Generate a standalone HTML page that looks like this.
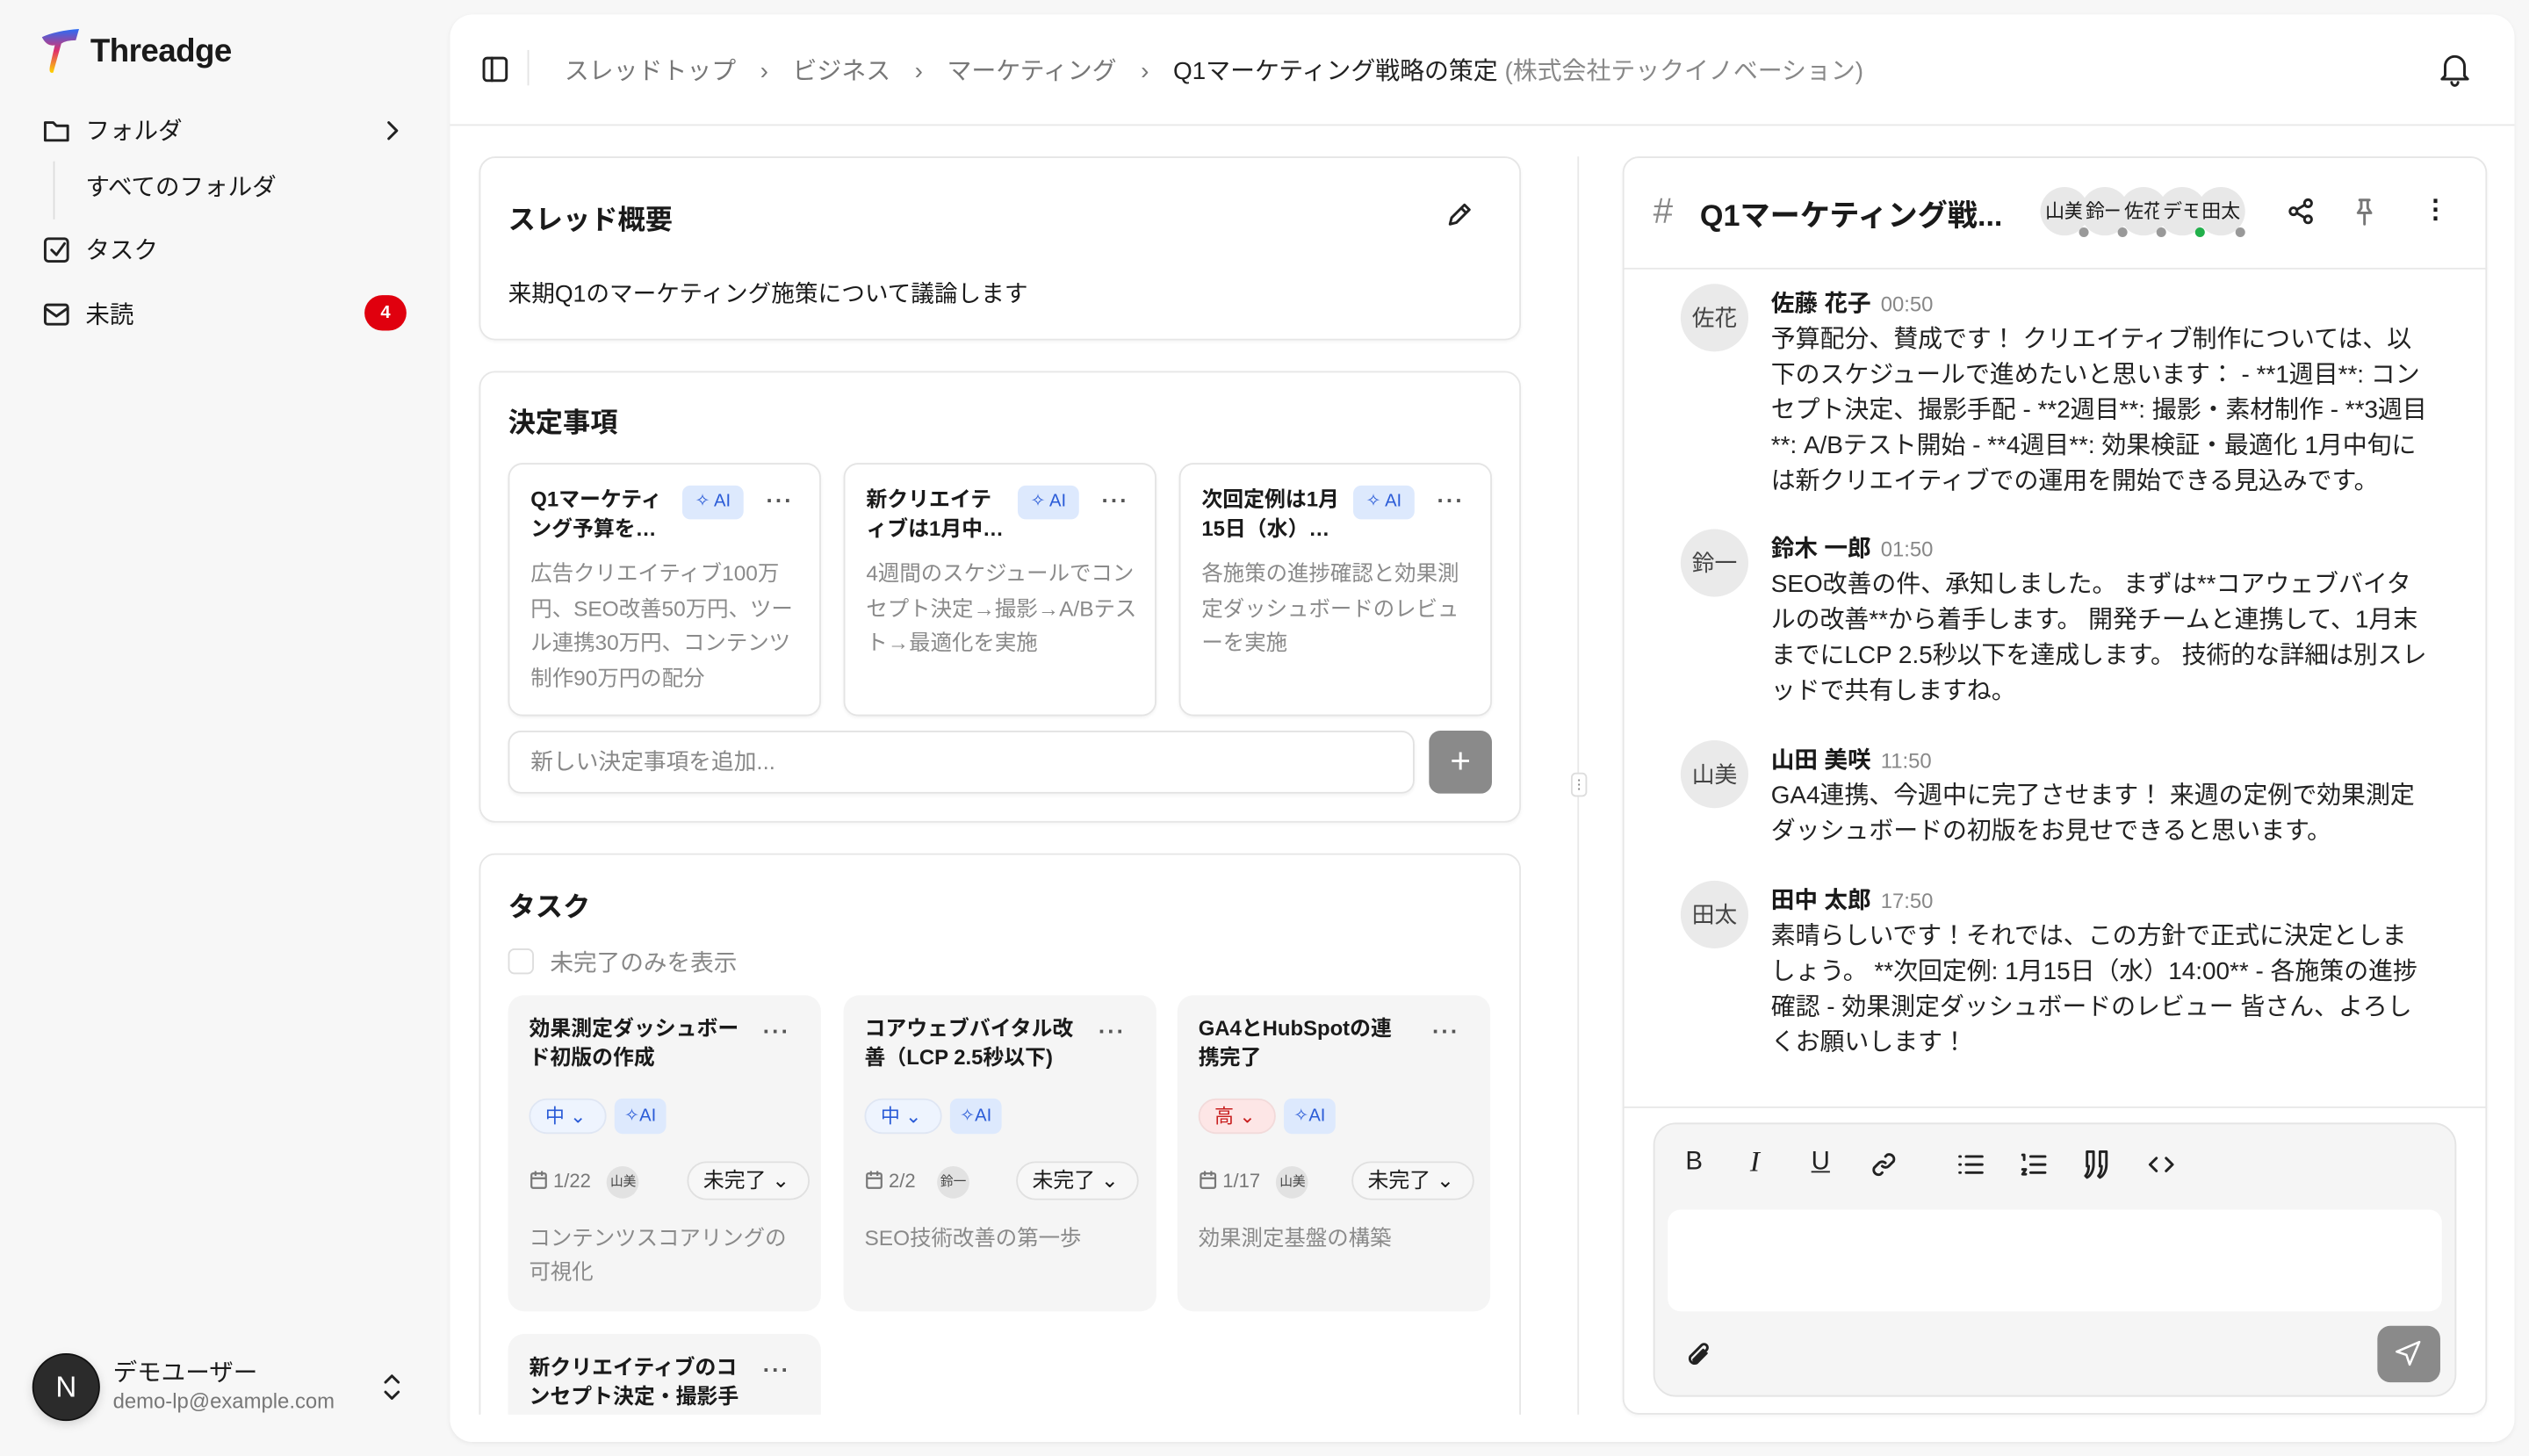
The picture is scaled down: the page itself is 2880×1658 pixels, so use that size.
<!DOCTYPE html>
<html><head><meta charset="utf-8"><style>
*{box-sizing:border-box;margin:0;padding:0}
html,body{width:2880px;height:1658px;overflow:hidden;background:#f7f7f7}
body{font-family:"Liberation Sans","Noto Sans CJK JP",sans-serif;color:#1a1a1a;position:relative}
#r{position:absolute;left:0;top:0;width:1568px;height:903px;transform:scale(1.836735);transform-origin:0 0;overflow:hidden}
.a{position:absolute}
.ic{fill:none;stroke:#222;stroke-width:1.6;stroke-linecap:round;stroke-linejoin:round}
.card{position:absolute;background:#fff;border:1px solid #e6e6e6;border-radius:10px;box-shadow:0 1px 2px rgba(0,0,0,.04)}
.h2{position:absolute;font-size:17px;font-weight:700}
.dc{position:absolute;top:287px;width:194px;height:157px;border:1px solid #e4e4e4;border-radius:9px;background:#fff;box-shadow:0 1px 2px rgba(0,0,0,.05)}
.dc .t{position:absolute;left:13px;top:13px;width:88px;font-size:13px;font-weight:700;line-height:18px}
.ai{position:absolute;background:#dde9fd;color:#2a5bd7;font-size:11px;border-radius:5px;width:38px;height:21px;line-height:21px;text-align:center}
.dots{position:absolute;font-size:14px;font-weight:700;color:#555;letter-spacing:1px}
.dc .d{position:absolute;left:13px;top:57px;width:168px;font-size:13.3px;line-height:21.5px;color:#8a8a8a}
.tc{position:absolute;width:194px;height:196px;background:#f5f5f5;border-radius:10px}
.tc .t{position:absolute;left:13px;top:12px;width:140px;font-size:13px;font-weight:700;line-height:18px}
.pr{position:absolute;left:13px;top:64px;width:48px;height:22px;border-radius:11px;border:1px solid #dfe6f3;background:#eef4fe;color:#2a5bd7;font-size:12px;line-height:20px;padding-left:9px}
.tc .ai{left:66px;top:64px;width:32px;height:22px;line-height:22px}
.meta{position:absolute;left:13px;top:104px;font-size:12px;color:#777;line-height:22px;white-space:nowrap}
.meta svg{vertical-align:-2px;margin-right:3px}
.av{display:inline-block;width:20px;height:20px;border-radius:50%;background:#e2e2e2;font-size:8px;color:#444;text-align:center;line-height:20px;vertical-align:middle}
.st{position:absolute;top:103px;width:76px;height:24px;border:1px solid #e0e0e0;border-radius:12px;font-size:13px;line-height:22px;padding-left:9px;background:#f7f7f7}
.tc .d{position:absolute;left:13px;top:140px;width:168px;font-size:13.3px;color:#8a8a8a;line-height:21px}
.msg{position:absolute;left:1042px}
.msg .c{position:absolute;left:0;top:0;width:42px;height:42px;border-radius:50%;background:#eaeaea;font-size:14px;color:#444;text-align:center;line-height:42px}
.msg .n{position:absolute;left:56px;top:1px;font-size:14.5px;font-weight:700;white-space:nowrap}
.msg .n span{font-weight:400;color:#888;font-size:13px;margin-left:6px}
.msg .b{position:absolute;left:56px;top:24px;width:409px;font-size:15.2px;line-height:22px;color:#222}
.tb{position:absolute;top:712px;font-size:16px;color:#222}
</style></head><body><div id="r">

<!-- sidebar -->
<svg class="a" style="left:25px;top:17px" width="28" height="30" viewBox="0 0 28 30"><defs><linearGradient id="g" x1="0" y1="0" x2="0" y2="1"><stop offset="0" stop-color="#2a6cf6"/><stop offset=".5" stop-color="#e0306a"/><stop offset="1" stop-color="#ffd400"/></linearGradient></defs><path d="M1 6 Q10 2 24 1 L22 8 Q16 8 13 10 L8 28 Q5 29 6 24 L9 11 Q4 12 1 6Z" fill="url(#g)"/></svg>
<div class="a" style="left:56px;top:21px;font-size:20px;font-weight:700;letter-spacing:-.3px">Threadge</div>

<svg class="a ic" style="left:26px;top:72px" width="18" height="18" viewBox="0 0 18 18"><path d="M2 4h5l2 2h7v9H2z"/></svg>
<div class="a" style="left:53px;top:70px;font-size:15px">フォルダ</div>
<svg class="a ic" style="left:237px;top:74px" width="12" height="14" viewBox="0 0 12 14"><path d="M4 2l5 5-5 5"/></svg>
<div class="a" style="left:33px;top:100px;width:1px;height:36px;background:#ddd"></div>
<div class="a" style="left:53px;top:105px;font-size:15px">すべてのフォルダ</div>
<svg class="a ic" style="left:26px;top:146px" width="18" height="18" viewBox="0 0 18 18"><rect x="2" y="2" width="14" height="14" rx="2"/><path d="M6 9l3 3 5-7"/></svg>
<div class="a" style="left:53px;top:144px;font-size:15px">タスク</div>
<svg class="a ic" style="left:26px;top:186px" width="18" height="18" viewBox="0 0 18 18"><rect x="2" y="3" width="14" height="12" rx="1.5"/><path d="M2 5l7 5 7-5"/></svg>
<div class="a" style="left:53px;top:184px;font-size:15px">未読</div>
<div class="a" style="left:226px;top:183px;width:26px;height:22px;border-radius:11px;background:#e0000e;color:#fff;font-size:11px;font-weight:700;text-align:center;line-height:22px">4</div>

<div class="a" style="left:20px;top:839px;width:42px;height:42px;border-radius:50%;background:#2b2b2b;border:1px solid #111;color:#fff;font-size:18px;text-align:center;line-height:40px;box-shadow:0 2px 6px rgba(0,0,0,.15)">N</div>
<div class="a" style="left:70px;top:840px;font-size:15px">デモユーザー</div>
<div class="a" style="left:70px;top:861px;font-size:13px;color:#777">demo-lp@example.com</div>
<svg class="a ic" style="left:237px;top:851px" width="12" height="18" viewBox="0 0 12 18"><path d="M2 6l4-4 4 4M2 12l4 4 4-4"/></svg>

<!-- main panel -->
<div class="a" style="left:279px;top:9px;width:1280px;height:885px;background:#fff;border-radius:14px;box-shadow:0 1px 3px rgba(0,0,0,.06)"></div>
<div class="a" style="left:279px;top:77px;width:1280px;height:1px;background:#e8e8e8"></div>
<svg class="a ic" style="left:298px;top:34px" width="18" height="18" viewBox="0 0 18 18"><rect x="2" y="2" width="14" height="14" rx="2"/><path d="M7 2v14"/></svg>
<div class="a" style="left:327px;top:31px;width:1px;height:22px;background:#e4e4e4"></div>
<div class="a" style="left:350px;top:32px;font-size:15.2px;color:#777;white-space:nowrap">スレッドトップ<span style="margin:0 15px">›</span>ビジネス<span style="margin:0 15px">›</span>マーケティング<span style="margin:0 15px">›</span><span style="color:#222">Q1マーケティング戦略の策定</span> <span style="color:#888">(株式会社テックイノベーション)</span></div>
<svg class="a ic" style="left:1512px;top:32px" width="20" height="22" viewBox="0 0 20 22"><path d="M4 15V9a6 6 0 0 1 12 0v6l2 2H2zM8 19a2 2 0 0 0 4 0"/></svg>

<!-- overview -->
<div class="card" style="left:297px;top:97px;width:646px;height:114px"></div>
<div class="h2" style="left:315px;top:122px">スレッド概要</div>
<svg class="a ic" style="left:896px;top:124px" width="18" height="18" viewBox="0 0 18 18"><path d="M3 15l1-4 8-8 3 3-8 8zM10 5l3 3"/></svg>
<div class="a" style="left:315px;top:171px;font-size:14.5px">来期Q1のマーケティング施策について議論します</div>

<!-- decisions -->
<div class="card" style="left:297px;top:230px;width:646px;height:280px"></div>
<div class="h2" style="left:315px;top:248px">決定事項</div>
<div class="dc" style="left:315px"><div class="t">Q1マーケティング予算を…</div><div class="ai" style="left:107px;top:13px">✧ AI</div><div class="dots" style="left:159px;top:14px">···</div><div class="d">広告クリエイティブ100万円、SEO改善50万円、ツール連携30万円、コンテンツ制作90万円の配分</div></div>
<div class="dc" style="left:523px"><div class="t">新クリエイティブは1月中…</div><div class="ai" style="left:107px;top:13px">✧ AI</div><div class="dots" style="left:159px;top:14px">···</div><div class="d">4週間のスケジュールでコンセプト決定→撮影→A/Bテスト→最適化を実施</div></div>
<div class="dc" style="left:731px"><div class="t">次回定例は1月15日（水）…</div><div class="ai" style="left:107px;top:13px">✧ AI</div><div class="dots" style="left:159px;top:14px">···</div><div class="d">各施策の進捗確認と効果測定ダッシュボードのレビューを実施</div></div>
<div class="a" style="left:315px;top:453px;width:562px;height:39px;border:1px solid #e2e2e2;border-radius:8px;font-size:14px;color:#888;line-height:37px;padding-left:13px;box-shadow:0 1px 2px rgba(0,0,0,.05)">新しい決定事項を追加...</div>
<div class="a" style="left:886px;top:453px;width:39px;height:39px;border-radius:7px;background:#8a8a8a;color:#fff;font-size:22px;text-align:center;line-height:37px">+</div>

<!-- tasks -->
<div class="a" style="left:297px;top:529px;width:646px;height:348px;overflow:hidden">
<div style="position:absolute;left:0;top:0;width:646px;height:420px;border:1px solid #e6e6e6;border-radius:10px"></div>
<div class="h2" style="left:18px;top:19px">タスク</div>
<div class="a" style="left:18px;top:59px;width:16px;height:16px;border:1px solid #ddd;border-radius:4px"></div>
<div class="a" style="left:44px;top:57px;font-size:14.5px;color:#888">未完了のみを表示</div>
<div class="tc" style="left:18px;top:88px"><div class="t">効果測定ダッシュボード初版の作成</div><div class="dots" style="left:158px;top:14px">···</div><div class="pr">中 ⌄</div><div class="ai">✧AI</div><div class="meta"><svg width="12" height="13" viewBox="0 0 12 13" fill="none" stroke="#777" stroke-width="1.2"><rect x="1.5" y="2.5" width="9" height="9" rx="1"/><path d="M1.5 5.5h9M4 1v3M8 1v3"/></svg>1/22 &nbsp;&nbsp;<span class="av">山美</span></div><div class="st" style="left:111px">未完了 ⌄</div><div class="d">コンテンツスコアリングの可視化</div></div>
<div class="tc" style="left:226px;top:88px"><div class="t">コアウェブバイタル改善（LCP 2.5秒以下)</div><div class="dots" style="left:158px;top:14px">···</div><div class="pr">中 ⌄</div><div class="ai">✧AI</div><div class="meta"><svg width="12" height="13" viewBox="0 0 12 13" fill="none" stroke="#777" stroke-width="1.2"><rect x="1.5" y="2.5" width="9" height="9" rx="1"/><path d="M1.5 5.5h9M4 1v3M8 1v3"/></svg>2/2 &nbsp;&nbsp;&nbsp;<span class="av">鈴一</span></div><div class="st" style="left:107px">未完了 ⌄</div><div class="d">SEO技術改善の第一歩</div></div>
<div class="tc" style="left:433px;top:88px"><div class="t" style="width:126px">GA4とHubSpotの連携完了</div><div class="dots" style="left:158px;top:14px">···</div><div class="pr" style="background:#fde6e6;border-color:#f2dada;color:#c81e1e">高 ⌄</div><div class="ai">✧AI</div><div class="meta"><svg width="12" height="13" viewBox="0 0 12 13" fill="none" stroke="#777" stroke-width="1.2"><rect x="1.5" y="2.5" width="9" height="9" rx="1"/><path d="M1.5 5.5h9M4 1v3M8 1v3"/></svg>1/17 &nbsp;&nbsp;<span class="av">山美</span></div><div class="st" style="left:108px">未完了 ⌄</div><div class="d">効果測定基盤の構築</div></div>
<div class="tc" style="left:18px;top:298px"><div class="t">新クリエイティブのコンセプト決定・撮影手</div><div class="dots" style="left:158px;top:14px">···</div></div>
</div>

<!-- divider -->
<div class="a" style="left:978px;top:97px;width:1px;height:780px;background:#e8e8e8"></div>
<div class="a" style="left:974px;top:479px;width:10px;height:15px;border:1px solid #ddd;border-radius:3px;background:#fff;font-size:8px;text-align:center;line-height:13px;color:#666">⋮</div>

<!-- chat -->
<div class="card" style="left:1006px;top:97px;width:536px;height:780px"></div>
<div class="a" style="left:1006px;top:166px;width:536px;height:1px;background:#e8e8e8"></div>
<div class="a" style="left:1025px;top:118px;font-size:22px;color:#888">#</div>
<div class="a" style="left:1054px;top:119px;font-size:18.6px;font-weight:700">Q1マーケティング戦...</div>
<div class="a" style="left:1265px;top:116px;height:30px;white-space:nowrap">
<span class="a" style="left:0;width:30px;height:30px;border-radius:50%;background:#e8e8e8;font-size:12px;line-height:30px;text-align:center;overflow:hidden">山美</span>
<span class="a" style="left:25px;width:30px;height:30px;border-radius:50%;background:#e8e8e8;font-size:12px;line-height:30px;text-align:center;overflow:hidden">鈴一</span>
<span class="a" style="left:49px;width:30px;height:30px;border-radius:50%;background:#e8e8e8;font-size:12px;line-height:30px;text-align:center;overflow:hidden">佐花</span>
<span class="a" style="left:73px;width:30px;height:30px;border-radius:50%;background:#e8e8e8;font-size:12px;line-height:30px;text-align:center;overflow:hidden">デモ</span>
<span class="a" style="left:97px;width:30px;height:30px;border-radius:50%;background:#e8e8e8;font-size:12px;line-height:30px;text-align:center;overflow:hidden">田太</span>
<span class="a" style="left:24px;top:25px;width:6px;height:6px;border-radius:50%;background:#999"></span>
<span class="a" style="left:48px;top:25px;width:6px;height:6px;border-radius:50%;background:#999"></span>
<span class="a" style="left:72px;top:25px;width:6px;height:6px;border-radius:50%;background:#999"></span>
<span class="a" style="left:96px;top:25px;width:6px;height:6px;border-radius:50%;background:#22b04b"></span>
<span class="a" style="left:121px;top:25px;width:6px;height:6px;border-radius:50%;background:#999"></span>
</div>
<svg class="a ic" style="left:1418px;top:122px" width="18" height="18" viewBox="0 0 18 18"><circle cx="13" cy="4" r="2.2"/><circle cx="4" cy="9" r="2.2"/><circle cx="13" cy="14" r="2.2"/><path d="M6 8l5-3M6 10l5 3"/></svg>
<svg class="a ic" style="left:1458px;top:122px;stroke:#777" width="16" height="18" viewBox="0 0 16 18"><path d="M5 2h6M6 2v5l-2 3h8l-2-3V2M8 10v7"/></svg>
<div class="a" style="left:1502px;top:120px;font-size:16px;font-weight:700">⋮</div>

<div class="msg" style="top:176px"><div class="c">佐花</div><div class="n">佐藤 花子<span>00:50</span></div><div class="b">予算配分、賛成です！ クリエイティブ制作については、以下のスケジュールで進めたいと思います： - **1週目**: コンセプト決定、撮影手配 - **2週目**: 撮影・素材制作 - **3週目**: A/Bテスト開始 - **4週目**: 効果検証・最適化 1月中旬には新クリエイティブでの運用を開始できる見込みです。</div></div>
<div class="msg" style="top:328px"><div class="c">鈴一</div><div class="n">鈴木 一郎<span>01:50</span></div><div class="b">SEO改善の件、承知しました。 まずは**コアウェブバイタルの改善**から着手します。 開発チームと連携して、1月末までにLCP 2.5秒以下を達成します。 技術的な詳細は別スレッドで共有しますね。</div></div>
<div class="msg" style="top:459px"><div class="c">山美</div><div class="n">山田 美咲<span>11:50</span></div><div class="b">GA4連携、今週中に完了させます！ 来週の定例で効果測定ダッシュボードの初版をお見せできると思います。</div></div>
<div class="msg" style="top:546px"><div class="c">田太</div><div class="n">田中 太郎<span>17:50</span></div><div class="b">素晴らしいです！それでは、この方針で正式に決定としましょう。 **次回定例: 1月15日（水）14:00** - 各施策の進捗確認 - 効果測定ダッシュボードのレビュー 皆さん、よろしくお願いします！</div></div>

<div class="a" style="left:1006px;top:686px;width:536px;height:1px;background:#e8e8e8"></div>
<div class="a" style="left:1025px;top:696px;width:498px;height:170px;background:#f5f5f5;border:1px solid #e4e4e4;border-radius:14px"></div>
<div class="tb" style="left:1045px">B</div>
<div class="tb" style="left:1085px;font-family:'Liberation Serif',serif;font-style:italic;font-size:18px;top:710px">I</div>
<div class="tb" style="left:1123px;text-decoration:underline">U</div>
<svg class="a ic" style="left:1159px;top:713px" width="18" height="18" viewBox="0 0 18 18"><path d="M8 10a3 3 0 0 0 4 0l3-3a3 3 0 0 0-4-4l-1 1M10 8a3 3 0 0 0-4 0l-3 3a3 3 0 0 0 4 4l1-1"/></svg>
<svg class="a ic" style="left:1213px;top:713px" width="18" height="18" viewBox="0 0 18 18"><path d="M6 4h10M6 9h10M6 14h10M2 4h.5M2 9h.5M2 14h.5"/></svg>
<svg class="a ic" style="left:1252px;top:713px" width="18" height="18" viewBox="0 0 18 18"><path d="M7 4h9M7 9h9M7 14h9M2 3h1v3M2 12h2l-2 3h2"/></svg>
<svg class="a ic" style="left:1291px;top:712px" width="18" height="20" viewBox="0 0 18 20"><path d="M3 2h4v8c0 4-2 7-4 8l-1-1c1-1 2-3 2-6H3zM11 2h4v8c0 4-2 7-4 8l-1-1c1-1 2-3 2-6h-1z"/></svg>
<svg class="a ic" style="left:1331px;top:713px" width="18" height="18" viewBox="0 0 18 18"><path d="M6 5l-4 4 4 4M12 5l4 4-4 4"/></svg>
<div class="a" style="left:1034px;top:750px;width:480px;height:63px;background:#fff;border-radius:8px"></div>
<svg class="a ic" style="left:1044px;top:831px" width="18" height="18" viewBox="0 0 18 18"><path d="M14 8l-6 6a3 3 0 0 1-4-4l7-7a2 2 0 0 1 3 3l-7 7a1 1 0 0 1-1-1l6-6"/></svg>
<div class="a" style="left:1474px;top:822px;width:39px;height:35px;border-radius:8px;background:#8a8a8a"></div>
<svg class="a" style="left:1484px;top:830px" width="18" height="18" viewBox="0 0 18 18" fill="none" stroke="#fff" stroke-width="1.4" stroke-linejoin="round"><path d="M16 2L2 8l6 2 2 6z"/></svg>

</div></body></html>
